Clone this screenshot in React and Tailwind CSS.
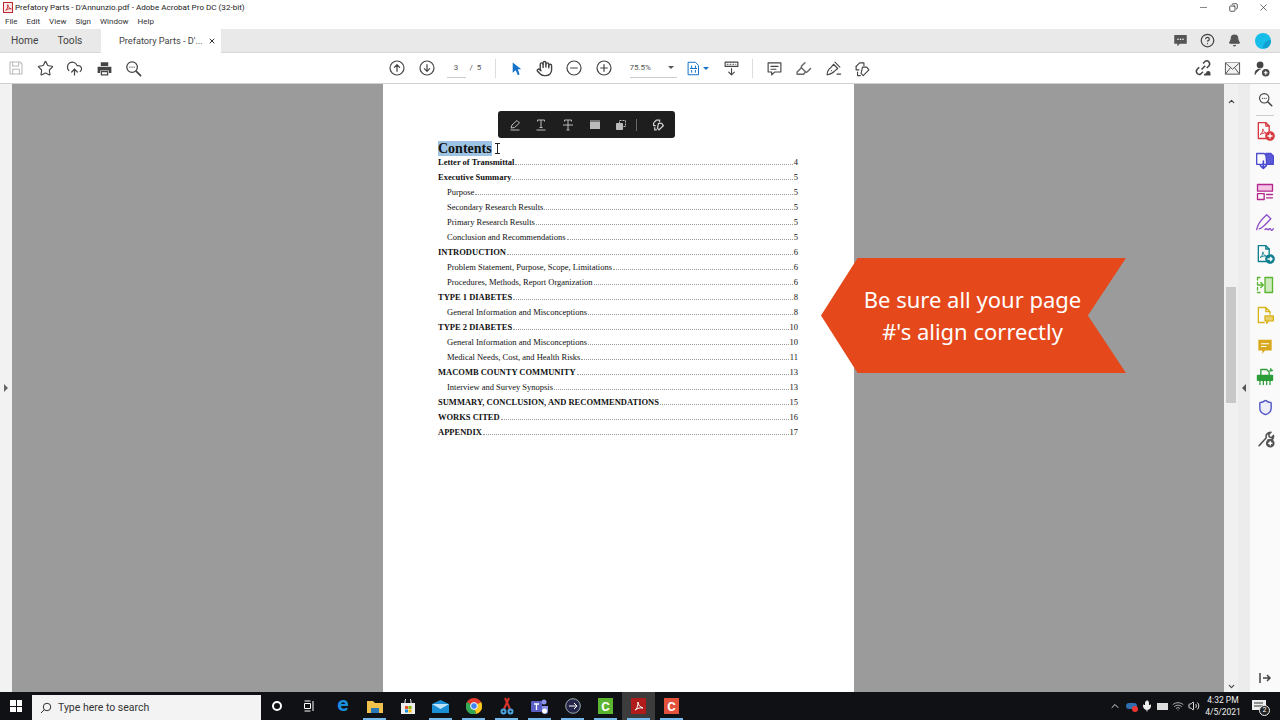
import React from "react";
import { Star, CloudUpload, Hand, X, Bell, HelpCircle, Shield, ChevronUp, ChevronDown, Volume2, Wifi, Mic, Highlighter, Copy } from "lucide-react";

const rows = [
  ["Letter of Transmittal", "4", 0],
  ["Executive Summary", "5", 0],
  ["Purpose", "5", 1],
  ["Secondary Research Results", "5", 1],
  ["Primary Research Results", "5", 1],
  ["Conclusion and Recommendations", "5", 1],
  ["INTRODUCTION", "6", 0],
  ["Problem Statement, Purpose, Scope, Limitations", "6", 1],
  ["Procedures, Methods, Report Organization", "6", 1],
  ["TYPE 1 DIABETES", "8", 0],
  ["General Information and Misconceptions", "8", 1],
  ["TYPE 2 DIABETES", "10", 0],
  ["General Information and Misconceptions", "10", 1],
  ["Medical Needs, Cost, and Health Risks", "11", 1],
  ["MACOMB COUNTY COMMUNITY", "13", 0],
  ["Interview and Survey Synopsis", "13", 1],
  ["SUMMARY, CONCLUSION, AND RECOMMENDATIONS", "15", 0],
  ["WORKS CITED", "16", 0],
  ["APPENDIX", "17", 0],
];

function S({ children, c = "#555", w = 18, sw = 1.6 }) {
  return (
    <svg width={w} height={w} viewBox="0 0 24 24" fill="none" stroke={c} strokeWidth={sw} strokeLinecap="round" strokeLinejoin="round">
      {children}
    </svg>
  );
}

function Circ({ children }) {
  return <S w={16} c="#444" sw={1.8}><circle cx="12" cy="12" r="10.5" />{children}</S>;
}

function Btn({ children, w = "w-[29.5px]" }) {
  return <div className={`${w} h-full flex items-center justify-center shrink-0`}>{children}</div>;
}

function Side({ children, h = "h-[30.8px]" }) {
  return <div className={`${h} w-full flex items-center justify-center shrink-0`}>{children}</div>;
}

function ZoomDots({ size = 17 }) {
  return (
    <S c="#444" w={size} sw={1.8}>
      <circle cx="10" cy="10" r="7.5" />
      <path d="M16 16l6 6" strokeWidth="2.4" />
      <path d="M7 10h.01M10 10h.01M13 10h.01" strokeWidth="2" />
    </S>
  );
}

function PdfDoc({ c, badge }) {
  return (
    <S c={c} w={20}>
      <path d="M13 21H4V2h9l4 4v6" />
      <path d="M13 2v4h4" />
      <path d="M6.500 16c2-1 3-4 3-6.500 0 2.500 1.500 4 4 5-3-.3-5 .2-7 1.500z" strokeWidth="1.1" />
      <circle cx="18" cy="18" r="5" fill={c} stroke={c} />
      {badge === "plus" ? <path d="M18 15.500v5M15.500 18h5" stroke="#fff" /> : <path d="M15.500 18h5M18.500 16l2 2-2 2" stroke="#fff" />}
    </S>
  );
}

function TB({ children, w = "w-[33px]", active, line }) {
  return (
    <div className={`${w} h-full flex items-center justify-center shrink-0 relative ${active ? "bg-[#3c3c3c]" : ""}`}>
      {children}
      {line && <div className="absolute bottom-0 left-[5px] right-[5px] h-[2px] bg-[#76b9ed]" />}
    </div>
  );
}

export default function App() {
  const ui = { fontFamily: 'Roboto,"Noto Sans",sans-serif' };
  return (
    <div className="w-[1280px] h-[720px] overflow-hidden flex flex-col bg-white relative" style={ui}>
      {/* title bar */}
      <div className="h-[15px] flex items-center bg-white shrink-0">
        <div className="w-[10px] h-[11px] ml-[3px] mr-[2px] border border-[#c0272d] bg-[#fbeaea] flex items-center justify-center">
          <svg width="7" height="7" viewBox="0 0 10 10" fill="none" stroke="#c0272d" strokeWidth="1.3"><path d="M1 9c2-1 3-4 3-8 0 3 2 5 5 6-3-.5-5 0-8 2z" /></svg>
        </div>
        <span className="text-[8.1px] text-[#222]">Prefatory Parts - D'Annunzio.pdf - Adobe Acrobat Pro DC (32-bit)</span>
        <div className="ml-auto flex items-center h-full mr-px">
          <div className="w-[30px] flex justify-center"><div className="w-[7px] h-px bg-[#888]" /></div>
          <div className="w-[30px] flex justify-center"><Copy size={9} color="#222" strokeWidth={2} className="-scale-x-100" /></div>
          <div className="w-[31px] flex justify-center"><X size={11} color="#333" strokeWidth={1.5} /></div>
        </div>
      </div>
      {/* menu */}
      <div className="h-[14px] flex items-center gap-[9px] pl-[5px] bg-white text-[8px] text-[#333] shrink-0">
        <span>File</span><span>Edit</span><span>View</span><span>Sign</span><span>Window</span><span>Help</span>
      </div>
      {/* tabs */}
      <div className="h-[24px] flex items-stretch bg-[#e9e9e9] shrink-0 border-b border-[#d8d8d8]">
        <div className="w-[101px] flex items-center pl-[11px] gap-[19px] text-[10.2px] text-[#444]">
          <span>Home</span><span>Tools</span>
        </div>
        <div className="w-[120px] bg-white -mb-px flex items-center pl-[18px] text-[9.2px] text-[#444]">
          <span>Prefatory Parts - D'...</span>
          <X size={8} color="#333" strokeWidth={3} className="ml-[5px]" />
        </div>
        <div className="ml-auto mr-[2px] flex items-center">
          <div className="w-[27px] flex justify-center">
            <svg width="15" height="15" viewBox="0 0 24 24"><path d="M2 3h20v14H11l-4 4v-4H2z" fill="#555" /><circle cx="8" cy="10" r="1.300" fill="#fff" /><circle cx="12" cy="10" r="1.300" fill="#fff" /><circle cx="16" cy="10" r="1.300" fill="#fff" /></svg>
          </div>
          <div className="w-[27px] flex justify-center"><HelpCircle size={15} color="#444" /></div>
          <div className="w-[27px] flex justify-center"><Bell size={13} color="#555" fill="#555" /></div>
          <div className="w-[30px] flex justify-center">
            <div className="w-[16px] h-[16px] rounded-full bg-[#16bde8] relative overflow-hidden"><div className="absolute right-0 bottom-[1px] w-[8px] h-[8px] rounded-tl-full bg-[#0f9fd0]" /></div>
          </div>
        </div>
      </div>
      {/* toolbar */}
      <div className="h-[31px] flex items-center bg-white shrink-0 border-b border-[#cfcfcf]">
        <div className="ml-[1px] flex h-full">
          <Btn>
            <S c="#bbb" w={16}><path d="M3 3h15l3 3v15H3z" /><path d="M7 3v6h9V3M7 21v-7h10v7" /></S>
          </Btn>
          <Btn><Star size={17} color="#444" strokeWidth={1.6} /></Btn>
          <Btn><CloudUpload size={17} color="#444" strokeWidth={1.7} /></Btn>
          <Btn>
            <svg width="15" height="15" viewBox="0 0 24 24"><path d="M6 2h12v6H6z" fill="#444" /><path d="M1 9h22v10h-4v-4H5v4H1z" fill="#444" /><path d="M7 17h10v5H7z" fill="none" stroke="#444" strokeWidth="2" /></svg>
          </Btn>
          <Btn><ZoomDots /></Btn>
        </div>
        <div className="ml-[234px] flex h-full">
          <Btn><Circ><path d="M12 17V7M8 11l4-4 4 4" /></Circ></Btn>
          <Btn><Circ><path d="M12 7v10M8 13l4 4 4-4" /></Circ></Btn>
        </div>
        <div className="ml-[5px] w-[19px] h-[19px] border-b border-[#ccc] flex items-center justify-center text-[8px] text-[#555]">3</div>
        <div className="ml-[4px] text-[8px] text-[#555] w-[20px]">/&nbsp;&nbsp;5</div>
        <div className="w-px h-[19px] bg-[#ddd] ml-[5px]" />
        <div className="ml-[5px] flex h-full">
          <Btn>
            <svg className="ml-[3px]" width="12" height="15" viewBox="0 0 14 16"><path d="M2 1l10 8H8l2 6-2 .8L5.500 10 2 13z" fill="#1473c9" /></svg>
          </Btn>
          <Btn><Hand size={17} color="#444" /></Btn>
          <Btn><Circ><path d="M7 12h10" /></Circ></Btn>
          <Btn><Circ><path d="M7 12h10M12 7v10" /></Circ></Btn>
        </div>
        <div className="ml-[11px] w-[47px] h-[19px] border-b border-[#ccc] flex items-center text-[8px] text-[#555]">
          <span>75.5%</span>
          <div className="ml-auto mr-[3px] w-0 h-0 border-x-[3px] border-x-transparent border-t-[3px] border-t-[#555]" />
        </div>
        <div className="ml-[9px] w-[24px] flex items-center">
          <S c="#1473c9" w={15}><path d="M4 2h11l5 5v15H4z" /><path d="M9 8v3M9 15v3M15 8v3M15 15v3M7 12h10" /></S>
          <div className="ml-[2px] w-0 h-0 border-x-[3px] border-x-transparent border-t-[3px] border-t-[#1473c9]" />
        </div>
        <div className="ml-[10px] w-[24px] flex justify-center">
          <S c="#444" w={17}><path d="M3 3h18v6H3z" /><path d="M6 6h1M10 6h1M14 6h1M18 6h0" /><path d="M12 12v8M8 17l4 4 4-4" /></S>
        </div>
        <div className="w-px h-[19px] bg-[#ddd] ml-[8px]" />
        <div className="ml-[7px] flex h-full">
          <Btn><S c="#444" w={17}><path d="M3 4h18v13H12l-4 4v-4H3z" /><path d="M7 9h10M7 13h7" /></S></Btn>
          <Btn><Highlighter size={17} color="#666" /></Btn>
          <Btn><S c="#444" w={17}><path d="M3 21c0-3 2-8 5-10l4-5 6 6-5 4c-2 3-7 4-10 5z" /><path d="M14 3l7 7" /><path d="M9 15h.01M17 20h5" /></S></Btn>
          <Btn><S c="#444" w={17}><path d="M3 9l5-5h6v4" /><path d="M3 9v5h4M9 22H5v-5" /><path d="M12 10h6l3 4-8 8-3-3z" /></S></Btn>
        </div>
        <div className="ml-auto mr-[4px] flex h-full items-center">
          <Btn>
            <svg width="18" height="18" viewBox="0 0 24 24" fill="none" stroke="#444" strokeWidth="2"><path d="M10 14l5-5M7 11l-3 3a4 4 0 005 6l3-3M17 12l3-3a4 4 0 00-5-6l-3 3" /><path d="M13 22a3 3 0 013-3 3 3 0 016 0v3z" fill="#444" stroke="none" /></svg>
          </Btn>
          <Btn>
            <svg width="17" height="17" viewBox="0 0 24 24" fill="#f2f2f2" stroke="#555" strokeWidth="1.4"><path d="M2 4h20v16H2z" /><path d="M2 4l10 9 10-9M2 20l7-9M22 20l-7-9" /></svg>
          </Btn>
          <div className="w-[29px] flex justify-center">
            <S c="#444" w={17}><circle cx="10" cy="7" r="4" fill="#444" /><path d="M3 20c0-5 3-7 7-7" fill="#444" /><circle cx="18" cy="18" r="4.500" fill="#555" /><path d="M18 16v4M16 18h4" stroke="#fff" /></S>
          </div>
        </div>
      </div>
      {/* main */}
      <div className="flex-1 min-h-0 flex">
        <div className="w-[12px] bg-[#f2f2f2] shrink-0 flex items-center justify-center">
          <div className="w-0 h-0 border-y-[4px] border-y-transparent border-l-[4px] border-l-[#666]" />
        </div>
        <div className="flex-1 bg-[#9b9b9b] flex pl-[371px] overflow-hidden">
          <div className="w-[471px] h-full bg-white pl-[55px] pr-[56px] pt-[55px]" style={{ fontFamily: '"Liberation Serif",serif' }}>
            <div className="h-[18px] flex items-center">
              <span className="text-[14px] font-bold text-[#111] bg-[#9cc3e3] leading-[15px]">Contents</span>
              <svg className="ml-[2px]" width="7" height="11" viewBox="0 0 7 11" fill="none" stroke="#222" strokeWidth="1"><path d="M1 .5h5M1 10.500h5M3.500 .5v10" /></svg>
            </div>
            <div className="-mt-[2px]">
              {rows.map((r, i) => (
                <div key={i} className={`h-[15px] flex items-center text-[8.5px] text-[#111] ${r[2] ? "pl-[9px]" : "font-bold"}`}>
                  <span className="whitespace-nowrap">{r[0]}</span>
                  <div className="flex-1 mx-px mt-[3px] border-b border-dotted border-[#999]" />
                  <span className="font-normal">{r[1]}</span>
                </div>
              ))}
            </div>
          </div>
        </div>
        <div className="w-[14px] bg-[#f0f0f0] shrink-0 flex flex-col items-center">
          <div className="h-[22px] flex items-end"><ChevronUp size={9} color="#444" strokeWidth={3} /></div>
          <div className="mt-[181px] w-[10px] h-[116px] bg-[#c8c8c8]" />
          <div className="mt-auto mb-px"><ChevronDown size={9} color="#444" strokeWidth={3} /></div>
        </div>
        <div className="w-[12px] bg-[#ececec] shrink-0 flex items-center justify-center">
          <div className="w-0 h-0 border-y-[4px] border-y-transparent border-r-[4px] border-r-[#555]" />
        </div>
        <div className="w-[30px] bg-[#fafafa] shrink-0 flex flex-col items-center">
          <Side h="h-[31px]"><ZoomDots size={15} /></Side>
          <div className="w-[18px] h-px bg-[#ccc] shrink-0" />
          <Side h="h-[30px]"><PdfDoc c="#d7373f" badge="plus" /></Side>
          <Side><S c="#4b4bd0" w={20}><path d="M2 3h9l3 3v10H2z" /><path d="M13 3h6l3 3v10h-8z" fill="#5a5ad6" /><path d="M10 12v9M6.500 17.500L10 21l3.500-3.500" strokeWidth="2" /></S></Side>
          <Side><S c="#b3278f" w={20}><path d="M3 3h18v8H3z" fill="#f3c4e4" /><path d="M3 14h8v7H3zM14 15h7M14 19h7" /></S></Side>
          <Side><S c="#8e4ec6" w={20}><path d="M2 20C3 14 7 9 10 6l4-4 5 5-4 4c-3 3-6 7-10 8" /><path d="M12 20c2-3 3 1 4 0s2-2 3 0 2 0 3-1" /></S></Side>
          <Side><PdfDoc c="#0d7f8f" badge="arrow" /></Side>
          <Side><S c="#5cb531" w={20}><path d="M12 3h9v18h-9z" fill="#cfeabf" /><path d="M3 3h6M3 21h6M3 3v18" strokeDasharray="3 3" /><path d="M4 12h5M7 9l3 3-3 3" /></S></Side>
          <Side><S c="#d8b41c" w={20}><path d="M4 3h9l5 5v3M4 3v18h7M13 3v5h5" /><path d="M12 13h10v6h-6l-2 3v-3h-2z" fill="#e8cf6a" /></S></Side>
          <Side><svg width="16" height="17" viewBox="0 0 24 24"><path d="M2 2h20v16H12l-4 5v-5H2z" fill="#d9a81c" /><path d="M6 8h12M6 12h8" stroke="#fff" strokeWidth="1.600" /></svg></Side>
          <Side><S c="#2d9d3a" w={20}><path d="M7 10V3h7l3 3v4M19 2v3M21 4h-3" /><path d="M3 10h18v6H3z" fill="#2d9d3a" /><path d="M6 16v6M10 16v6M14 16v6M18 16v6" strokeDasharray="2 1" /></S></Side>
          <Side><Shield size={17} color="#5258c4" fill="#eeeefb" /></Side>
          <Side><S c="#555" w={19} sw={2}><path d="M4 21L13 11c-1-3 1-7 6-7l-3 3 1 3 3 1 2-3c1 5-3 7-7 6" /><circle cx="18" cy="18" r="4.500" fill="#555" /><path d="M18 16v4M16 18h4" stroke="#fff" /></S></Side>
          <div className="mt-auto h-[29px] flex items-center justify-center">
            <svg width="12" height="10" viewBox="0 0 12 10" fill="none" stroke="#444" strokeWidth="1.5"><path d="M1 0v10M4 5h7M8 2l3 3-3 3" /></svg>
          </div>
        </div>
      </div>
      {/* toolbar overlay over the page */}
      <div className="absolute left-[498px] top-[111px] w-[177px] h-[27px] bg-[#1e1e1e] rounded-[3px] flex items-center pl-[3px]">
        <div className="w-[27px] flex justify-center">
          <svg width="12" height="12" viewBox="0 0 24 24" fill="none" stroke="#bbb" strokeWidth="2"><path d="M4 18l2-6L16 3l5 5-10 9zM3 22h18" /></svg>
        </div>
        <div className="w-[26px] flex justify-center">
          <svg width="12" height="12" viewBox="0 0 24 24" fill="none" stroke="#bbb" strokeWidth="2"><path d="M5 5V2h14v3M12 2v15M9 17h6M3 22h18" /></svg>
        </div>
        <div className="w-[27px] flex justify-center">
          <svg width="12" height="12" viewBox="0 0 24 24" fill="none" stroke="#bbb" strokeWidth="2"><path d="M5 5V2h14v3M12 2v20M9 22h6M2 12h20" /></svg>
        </div>
        <div className="w-[27px] flex justify-center"><div className="w-[10px] h-[9px] bg-[#bbb] border-t-2 border-[#777]" /></div>
        <div className="w-[26px] flex justify-center">
          <svg width="12" height="12" viewBox="0 0 24 24" fill="none" stroke="#bbb" strokeWidth="2"><path d="M9 9V3h12v12h-6" strokeDasharray="4 2" /><path d="M3 9h12v12H3z" fill="#bbb" /></svg>
        </div>
        <div className="w-px h-[12px] bg-[#666] ml-[2px]" />
        <div className="ml-[9px] w-[24px] flex justify-center">
          <svg width="13" height="13" viewBox="0 0 24 24" fill="none" stroke="#ccc" strokeWidth="2.400"><path d="M3 9l5-5h6v4M3 9v5h4M9 22H5v-5" /><path d="M12 10h6l3 4-8 8-3-3z" /></svg>
        </div>
      </div>
      {/* callout */}
      <div className="absolute left-[821px] top-[258px] w-[305px] h-[115px] bg-[#e5481b] [clip-path:polygon(0_50%,12%_0,100%_0,87.500%_50%,100%_100%,12%_100%)] flex flex-col items-center justify-center pr-[2px] pb-[1px] text-white text-[22px] leading-[32px]" style={{ fontFamily: '"Noto Sans",sans-serif' }}>
        <span>Be sure all your page</span>
        <span>#'s align correctly</span>
      </div>
      {/* taskbar */}
      <div className="h-[28px] bg-[#101114] flex items-center shrink-0 relative">
        <div className="w-[32px] flex justify-center">
          <div className="grid grid-cols-2 gap-px w-[12px] h-[12px]">
            <div className="bg-white" /><div className="bg-white" /><div className="bg-white" /><div className="bg-white" />
          </div>
        </div>
        <div className="w-[229px] h-[25px] mt-[3px] bg-[#f3f3f3] flex items-center pl-[8px] text-[10.5px] text-[#333]">
          <svg width="12" height="12" viewBox="0 0 24 24" fill="none" stroke="#333" strokeWidth="2"><circle cx="14" cy="10" r="7.500" /><path d="M8.500 15.500L2 22" /></svg>
          <span className="ml-[6px]">Type here to search</span>
        </div>
        <div className="flex h-full">
          <TB w="w-[32px]"><div className="w-[10px] h-[10px] rounded-full border-2 border-white" /></TB>
          <TB w="w-[32px]"><svg width="12" height="12" viewBox="0 0 12 12" fill="none" stroke="#fff"><path d="M1.500 1h6M1.500 11h6M1.500 3.500h6v5h-6zM10 1v10" /></svg></TB>
          <TB><span className="text-[21px] font-bold text-[#1a8fe0] leading-none ml-[3px] -mt-[3px]">e</span></TB>
          <TB line><svg width="16" height="14" viewBox="0 0 16 14"><path d="M0 2h6l2 2h8v10H0z" fill="#f0c14b" /><path d="M4 9h8v5H4z" fill="#2a78b8" /></svg></TB>
          <TB><svg width="14" height="15" viewBox="0 0 14 15"><path d="M0 4h14v11H0z" fill="#eee" /><path d="M4 4V2a3 3 0 016 0v2" stroke="#eee" fill="none" /><path d="M4 7h3v3H4z" fill="#e8502f" /><path d="M7.500 7h3v3h-3z" fill="#7fba00" /><path d="M4 10.500h3v3H4z" fill="#1e90e0" /><path d="M7.500 10.500h3v3h-3z" fill="#ffb900" /></svg></TB>
          <TB line><svg width="17" height="13" viewBox="0 0 17 13"><path d="M0 4L8.500 0 17 4v9H0z" fill="#1a8fd6" /><path d="M0 4l8.500 5L17 4" fill="#bfe3f7" /></svg></TB>
          <TB line><svg width="16" height="16" viewBox="0 0 16 16"><circle cx="8" cy="8" r="8" fill="#e33b2e" /><path d="M8 8l7-4a8 8 0 01-5 12z" fill="#f8c81c" /><path d="M8 8l2 8A8 8 0 011 4z" fill="#34a853" /><circle cx="8" cy="8" r="3.400" fill="#4285f4" stroke="#fff" /></svg></TB>
          <TB line><svg width="14" height="18" viewBox="0 0 14 18" fill="none" stroke="#d9342b" strokeWidth="2"><path d="M5 1l5 11M9 1L4 12" /><circle cx="3.500" cy="14.500" r="2" stroke="#49a5e0" /><circle cx="10.500" cy="14.500" r="2" stroke="#49a5e0" /></svg></TB>
          <TB line><svg width="17" height="16" viewBox="0 0 17 16"><rect x="0" y="3" width="11" height="11" rx="1" fill="#5b60c5" /><circle cx="13" cy="4" r="2.500" fill="#8b90e8" /><path d="M11 8h6v5a3 3 0 01-6 0z" fill="#8b90e8" /><circle cx="13.500" cy="13" r="2.500" fill="#fff" /><path d="M3 6h5M5.500 6v6" stroke="#fff" strokeWidth="1.300" /></svg></TB>
          <TB line><svg width="16" height="16" viewBox="0 0 16 16" fill="none"><circle cx="8" cy="8" r="7.300" fill="#26264a" stroke="#9aa" /><path d="M4 8h8M9 5l3 3-3 3" stroke="#fff" /></svg></TB>
          <TB line><div className="w-[15px] h-[16px] bg-[#5cb531] flex items-center justify-center text-white font-bold text-[13px] leading-none">C</div></TB>
          <TB active line><div className="w-[15px] h-[16px] bg-[#b01c1c] flex items-center justify-center"><svg width="10" height="10" viewBox="0 0 10 10" fill="none" stroke="#fff"><path d="M1 9c2-1 3-4 3-8 0 3 2 5 5 6-3-.5-5 0-8 2z" /></svg></div></TB>
          <TB line><div className="w-[15px] h-[16px] bg-[#e4513c] flex items-center justify-center text-white font-bold text-[13px] leading-none">C</div></TB>
        </div>
        <div className="ml-auto flex items-center h-full">
          <div className="w-[16px] flex justify-center"><ChevronUp size={12} color="#ddd" /></div>
          <div className="w-[16px] flex justify-center relative"><div className="w-[11px] h-[6px] rounded-full bg-[#2f6fb0]" /><div className="absolute right-[1px] top-[3px] w-[6px] h-[6px] rounded-full bg-[#e33]" /></div>
          <div className="w-[15px] flex justify-center"><Mic size={12} color="#eee" fill="#eee" /></div>
          <div className="w-[16px] flex justify-center"><div className="w-[11px] h-[7px] bg-[#ddd]" /></div>
          <div className="w-[16px] flex justify-center"><Wifi size={12} color="#aaa" /></div>
          <div className="w-[15px] flex justify-center"><Volume2 size={12} color="#ddd" /></div>
          <div className="w-[42px] ml-[1px] flex flex-col items-center text-[8.5px] leading-[12px] text-[#eee]">
            <span>4:32 PM</span><span>4/5/2021</span>
          </div>
          <div className="w-[30px] h-full mr-[6px] flex items-center justify-center relative">
            <svg width="14" height="13" viewBox="0 0 14 13"><path d="M0 0h14v10H0z" fill="#eee" /><path d="M2 3h9M2 6h9" stroke="#333" /></svg>
            <div className="absolute right-[4px] top-[13px] w-[11px] h-[11px] rounded-full bg-[#222] border border-[#eee] text-[7px] text-white flex items-center justify-center">2</div>
          </div>
        </div>
      </div>
    </div>
  );
}
